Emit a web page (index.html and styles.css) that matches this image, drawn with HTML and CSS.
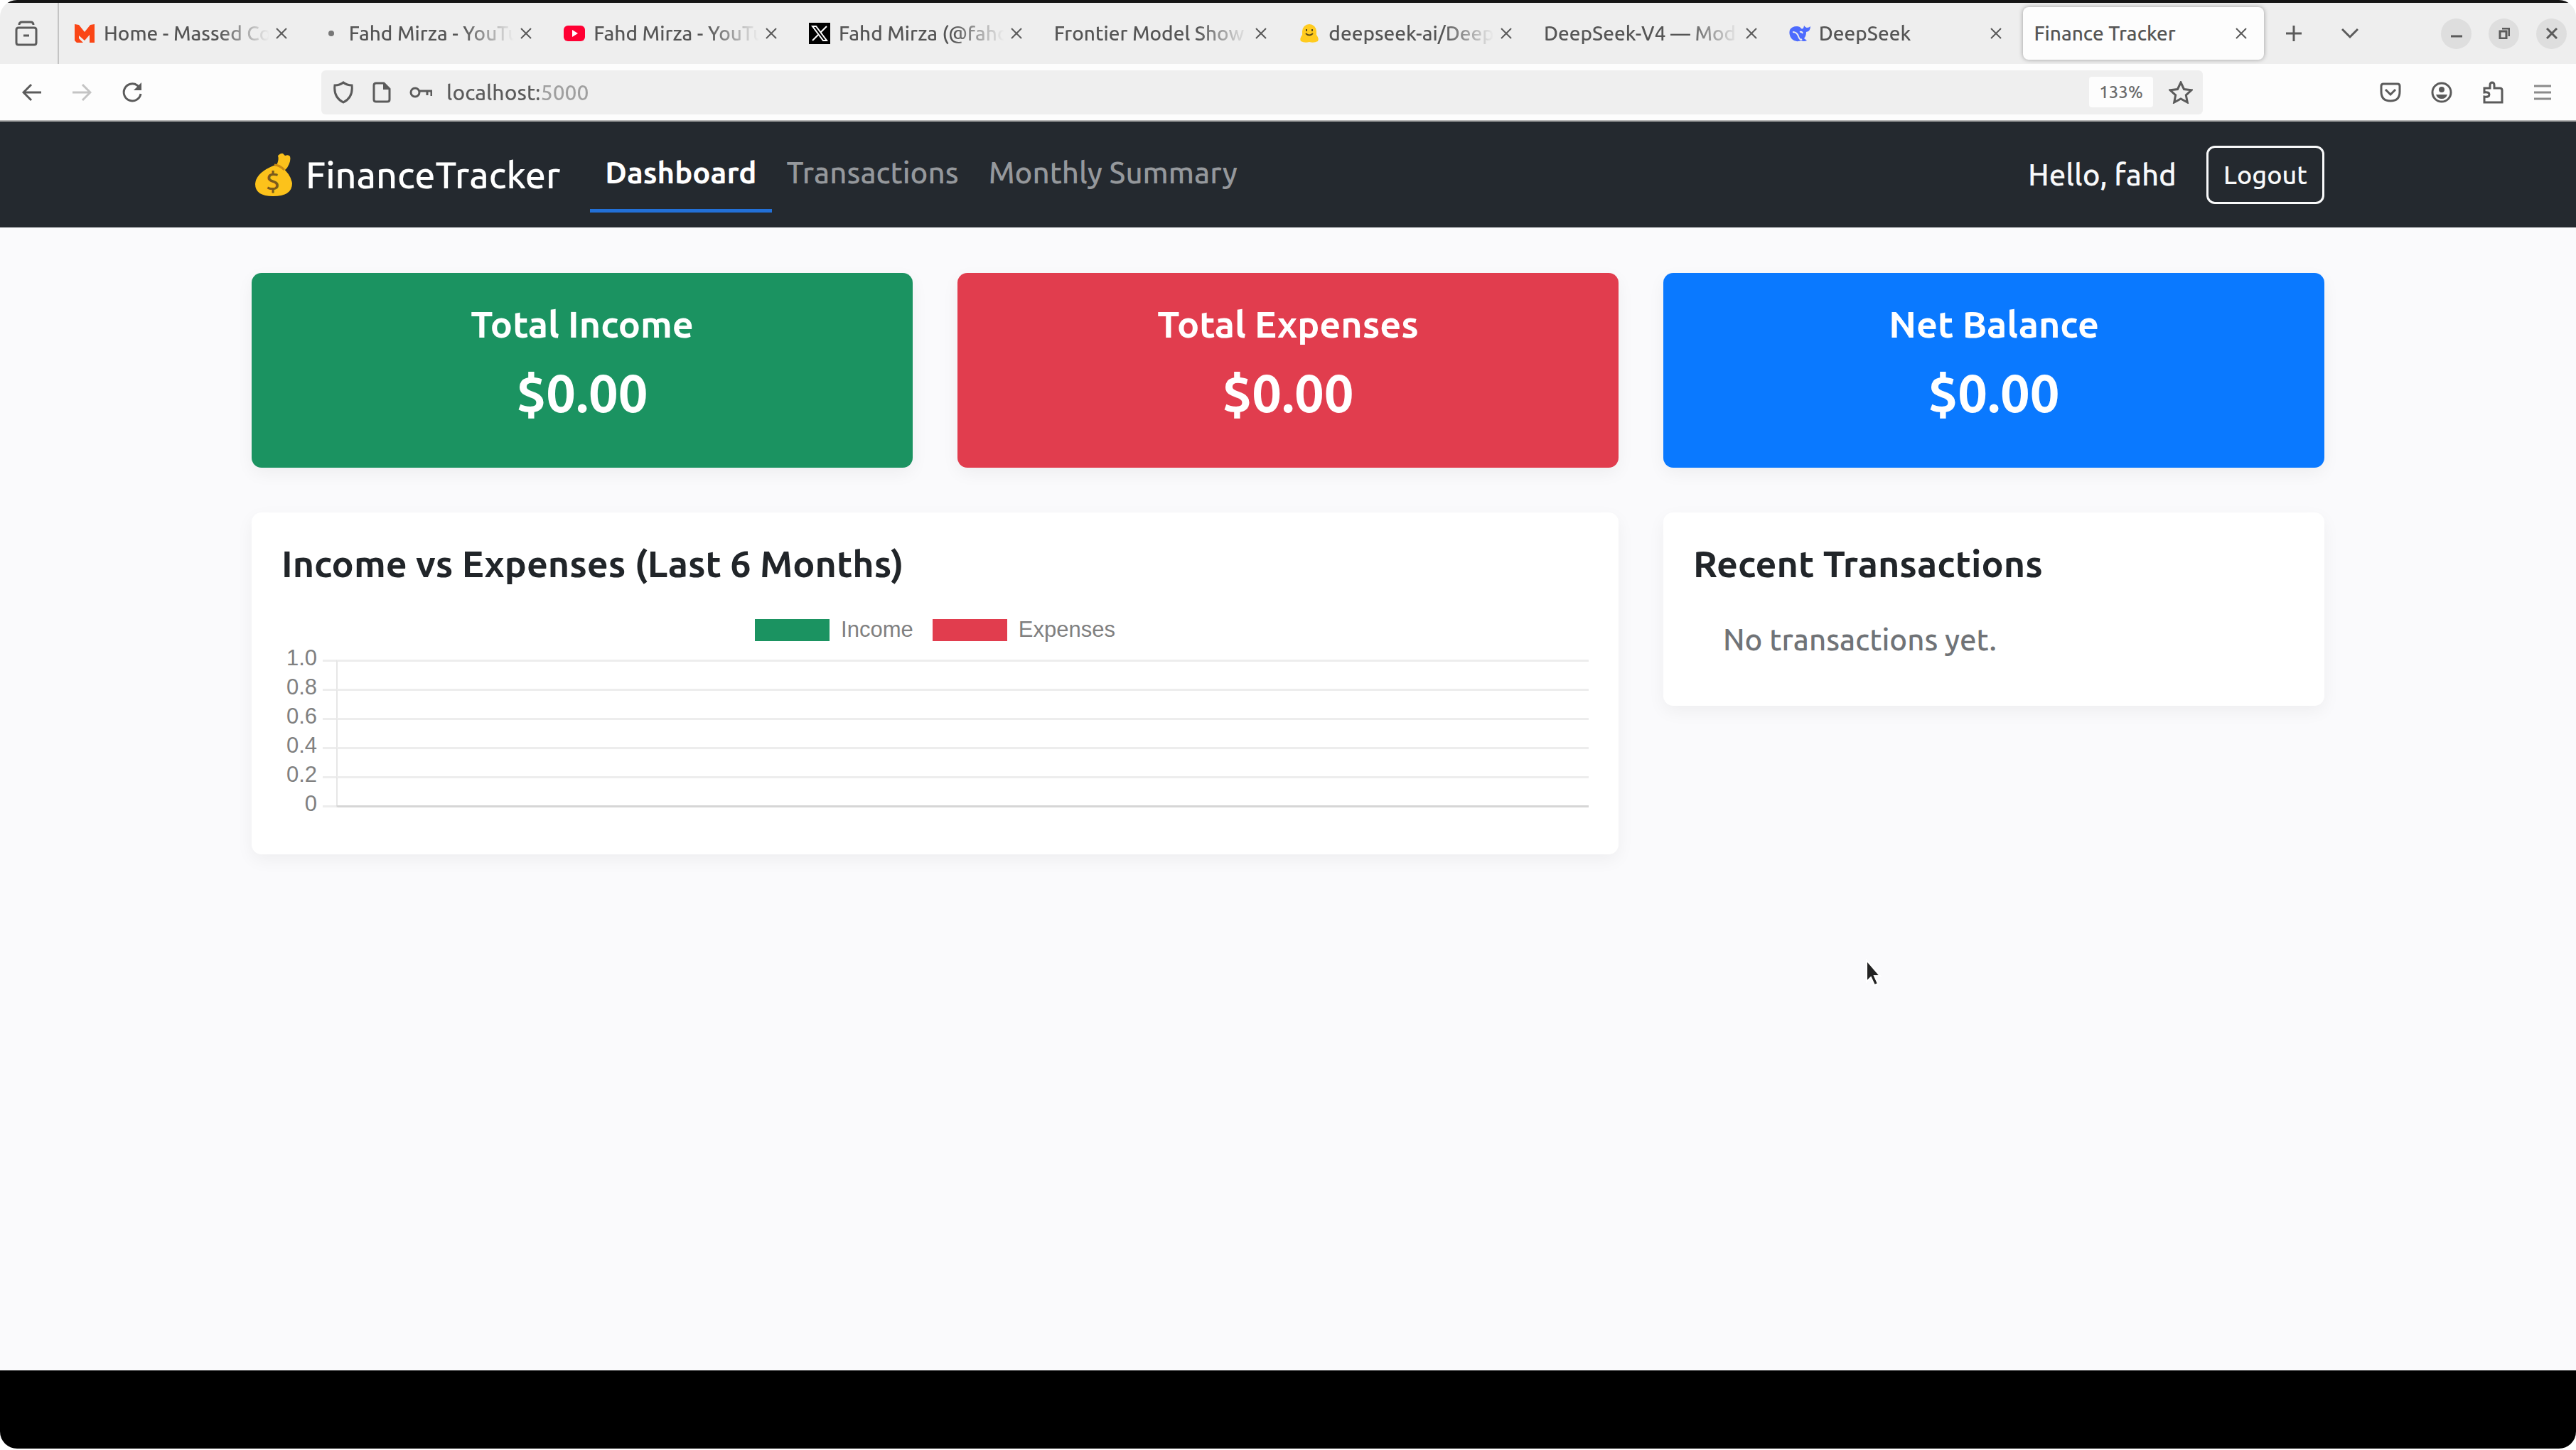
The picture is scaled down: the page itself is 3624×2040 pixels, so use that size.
FILE: index.html
```html
<!DOCTYPE html>
<html lang="en">
<head>
  <meta charset="utf-8">
  <meta name="viewport" content="width=device-width, initial-scale=1">
  <title>Finance Tracker</title>
  <link rel="stylesheet" href="styles.css">
</head>
<body>
<div class="window">

  <!-- tab strip -->
  <div class="tabstrip">
    <button class="history-btn" aria-label="Recent browsing">
      <svg width="34" height="36" viewBox="0 0 34 36"><path d="M7 6q0-4 4-4h12q4 0 4 4M3 13q0-3 3-3h22q3 0 3 3v18q0 3-3 3H6q-3 0-3-3zM13 21h8"/></svg>
    </button>
    <div class="tabs">
      <div class="tab">
        <svg class="favicon" viewBox="0 0 30 30"><path fill="#fa4616" d="M1 2l6 1 8 10 8-10 6-1v26h-7V17l-7 8-8-7v4l6 6H4l-3-3z"/></svg>
        <span class="tab-title">Home - Massed Co</span>
        <button class="close" aria-label="Close tab"><svg viewBox="0 0 18 18"><path d="M2 2l14 14M16 2L2 16"/></svg></button>
      </div>
      <div class="tab">
        <svg class="favicon" viewBox="0 0 30 30"><circle cx="17" cy="15" r="4" fill="#777"/></svg>
        <span class="tab-title">Fahd Mirza - YouTu</span>
        <button class="close" aria-label="Close tab"><svg viewBox="0 0 18 18"><path d="M2 2l14 14M16 2L2 16"/></svg></button>
      </div>
      <div class="tab">
        <svg class="favicon" viewBox="0 0 30 30"><rect y="4" width="30" height="22" rx="6" fill="#f03"/><path fill="#fff" d="M12 10l8 5-8 5z"/></svg>
        <span class="tab-title">Fahd Mirza - YouTu</span>
        <button class="close" aria-label="Close tab"><svg viewBox="0 0 18 18"><path d="M2 2l14 14M16 2L2 16"/></svg></button>
      </div>
      <div class="tab">
        <svg class="favicon" viewBox="0 0 30 30"><rect width="30" height="30" fill="#000"/><path fill="none" stroke="#fff" stroke-width="2" d="M5 5h5l15 20h-5zM25 5l-9 9M13 17l-8 8"/></svg>
        <span class="tab-title">Fahd Mirza (@fahd</span>
        <button class="close" aria-label="Close tab"><svg viewBox="0 0 18 18"><path d="M2 2l14 14M16 2L2 16"/></svg></button>
      </div>
      <div class="tab">
        <span class="tab-title">Frontier Model Show</span>
        <button class="close" aria-label="Close tab"><svg viewBox="0 0 18 18"><path d="M2 2l14 14M16 2L2 16"/></svg></button>
      </div>
      <div class="tab">
        <svg class="favicon" viewBox="0 0 30 30"><path fill="#ffcb1f" d="M5 12a10 10 0 0 1 20 0v5q4 5 2 9-6 3-12 1-6 2-12-1-2-4 2-9z"/><path fill="none" stroke="#5b4a1a" stroke-width="2" d="M11 9v3M19 9v3M10 15q5 5 10 0"/></svg>
        <span class="tab-title">deepseek-ai/Deep</span>
        <button class="close" aria-label="Close tab"><svg viewBox="0 0 18 18"><path d="M2 2l14 14M16 2L2 16"/></svg></button>
      </div>
      <div class="tab">
        <span class="tab-title">DeepSeek-V4 — Mod</span>
        <button class="close" aria-label="Close tab"><svg viewBox="0 0 18 18"><path d="M2 2l14 14M16 2L2 16"/></svg></button>
      </div>
      <div class="tab">
        <svg class="favicon" viewBox="0 0 30 30"><path fill="#4d6bfe" d="M11 5q4 0 6 3 3 2 4-4 2 3 4 3 3 0 5-2 0 7-6 8 0 6-3 9l4 3q-4 2-8 0Q9 28 4 23-1 17 1 10 4 5 11 5z"/><path fill="none" stroke="#eee" stroke-width="2" d="M5 13q6 0 8 6t5 4M15 13q3-1 4 2"/></svg>
        <span class="tab-title">DeepSeek</span>
        <button class="close" aria-label="Close tab"><svg viewBox="0 0 18 18"><path d="M2 2l14 14M16 2L2 16"/></svg></button>
      </div>
      <div class="tab active">
        <span class="tab-title">Finance Tracker</span>
        <button class="close" aria-label="Close tab"><svg viewBox="0 0 18 18"><path d="M2 2l14 14M16 2L2 16"/></svg></button>
      </div>
    </div>
    <div class="strip-btns">
      <button aria-label="New tab"><svg width="24" height="24" viewBox="0 0 24 24"><path d="M12 1v22M1 12h22"/></svg></button>
      <button aria-label="List all tabs"><svg width="24" height="24" viewBox="0 0 24 24"><path d="M1 6l11 11L23 6"/></svg></button>
    </div>
    <div class="win-btns">
      <button aria-label="Minimize"><svg width="16" height="16" viewBox="0 0 16 16"><path d="M0 12h16"/></svg></button>
      <button aria-label="Restore"><svg width="16" height="16" viewBox="0 0 16 16"><path d="M2 5h9v10H2zM5 1h10v11"/></svg></button>
      <button aria-label="Close"><svg width="16" height="16" viewBox="0 0 16 16"><path d="M1 1l14 14M15 1L1 15"/></svg></button>
    </div>
  </div>

  <!-- address bar -->
  <div class="toolbar">
    <div class="nav-btns">
      <button aria-label="Back"><svg width="28" height="28" viewBox="0 0 28 28"><path d="M27 14H2M13 3L2 14l11 11"/></svg></button>
      <button class="off" aria-label="Forward"><svg width="28" height="28" viewBox="0 0 28 28"><path d="M1 14h25M15 3l11 11-11 11"/></svg></button>
      <button aria-label="Reload"><svg width="30" height="30" viewBox="0 0 30 30"><path d="M27 17A12 12 0 1 1 22 5l3 3"/><path class="solid" d="M28 1v11H17z"/></svg></button>
    </div>
    <div class="urlbar">
      <svg width="30" height="32" viewBox="0 0 30 32"><path d="M15 2q5 4 12 4 2 17-12 24Q1 23 3 6q7 0 12-4z"/></svg>
      <svg width="26" height="30" viewBox="0 0 26 30"><path d="M2 5q0-3 3-3h11l8 8v15q0 3-3 3H5q-3 0-3-3z"/><path class="solid" d="M15 2l9 9h-9z"/></svg>
      <svg width="32" height="20" viewBox="0 0 32 20"><circle cx="8" cy="10" r="6"/><path d="M14 8h17v7M25 8v6"/></svg>
      <input class="url" type="text" value="localhost:5000" aria-label="Address">
      <button class="zoom-level">133%</button>
      <svg width="34" height="32" viewBox="0 0 34 32"><path d="M17 2l4.500 9.500 10.500 1.300-7.700 7 2 10.200-9.300-5-9.300 5 2-10.200-7.700-7 10.500-1.300z"/></svg>
    </div>
    <div class="tool-btns">
      <button aria-label="Save to Pocket"><svg width="30" height="30" viewBox="0 0 30 30"><path d="M5 3h20q3 0 3 3v8q0 13-13 13T2 14V6q0-3 3-3zM8 11l7 7 7-7"/></svg></button>
      <button aria-label="Account"><svg width="30" height="30" viewBox="0 0 30 30"><circle cx="15" cy="15" r="13"/><circle class="solid" cx="15" cy="11" r="4"/><path class="solid" d="M7 18h16q-2 6-8 6t-8-6z"/></svg></button>
      <button aria-label="Extensions"><svg width="30" height="32" viewBox="0 0 30 32"><path d="M3 30V22q7 1 7-3t-7-3v-6h8V6q0-4 3-4t3 4v4h8q3 0 3 3v17z"/></svg></button>
      <button class="menu-btn" aria-label="Menu"><svg width="26" height="24" viewBox="0 0 26 24"><path d="M1 3h24M1 12h24M1 21h24"/></svg></button>
    </div>
  </div>

  <!-- page -->
  <div class="page">
    <nav class="navbar">
      <div class="container nav-inner">
        <a class="brand" href="#">
          <svg width="54" height="62" viewBox="0 0 54 62">
            <path fill="#fcc21b" d="M31 17q4-7 2-13 4-4 7-3l3 3q5-2 7 1 2 6-4 16l-4 4-12-4z"/>
            <path fill="#fcc21b" d="M27 18q6-2 12 3 12 9 14 22 0 18-27 18Q1 61 1 44q1-16 26-26z"/>
            <path fill="none" stroke="#c98a12" stroke-width="3" d="M28 17q7 0 14 7"/>
            <text x="26" y="52" text-anchor="middle" class="dollar">$</text>
          </svg>
          FinanceTracker</a>
        <div class="nav-links">
          <a class="active" href="#">Dashboard</a>
          <a href="#">Transactions</a>
          <a href="#">Monthly Summary</a>
        </div>
        <span class="hello">Hello, fahd</span>
        <button class="logout">Logout</button>
      </div>
    </nav>

    <main class="container grid">
      <section class="card stat income">
        <h5>Total Income</h5>
        <h2>$0.00</h2>
      </section>
      <section class="card stat expense">
        <h5>Total Expenses</h5>
        <h2>$0.00</h2>
      </section>
      <section class="card stat balance">
        <h5>Net Balance</h5>
        <h2>$0.00</h2>
      </section>

      <section class="card chart-card">
        <h5>Income vs Expenses (Last 6 Months)</h5>
        <div class="legend">
          <span class="swatch income"></span><span>Income</span>
          <span class="swatch expense"></span><span>Expenses</span>
        </div>
        <div class="chart">
          <div class="row"><span>1.0</span><i class="tick"></i><i class="line"></i></div>
          <div class="row"><span>0.8</span><i class="tick"></i><i class="line"></i></div>
          <div class="row"><span>0.6</span><i class="tick"></i><i class="line"></i></div>
          <div class="row"><span>0.4</span><i class="tick"></i><i class="line"></i></div>
          <div class="row"><span>0.2</span><i class="tick"></i><i class="line"></i></div>
          <div class="row base"><span>0</span><i class="tick"></i><i class="line"></i></div>
        </div>
      </section>

      <section class="card recent">
        <h5>Recent Transactions</h5>
        <p>No transactions yet.</p>
      </section>
    </main>
  </div>

  <div class="letterbox"></div>

  <svg class="cursor" width="24" height="40" viewBox="0 0 24 40"><path d="M2 2v30l6-6 5 11 5-2-5-11h8z"/></svg>
</div>
</body>
</html>
```

FILE: styles.css
```css
* {box-sizing: border-box;}
body {margin: 0; background: #fff; color: #212529; font-family: Ubuntu, "Noto Sans", sans-serif; font-size: 42px; line-height: 60px; font-weight: 500;}
button {border: 0; padding: 0; background: none; font-family: inherit; font-weight: inherit; cursor: pointer;}
svg {display: block; flex: none;}
h2, h5, p {margin: 0;}
a {text-decoration: none;}

.window {position: relative; display: flex; flex-direction: column; min-height: calc(100vh - 2px); border-radius: 24px; overflow: hidden; background: #fafafc;}

/* tab strip */
.tabstrip {display: flex; align-items: center; height: 90px; border-top: 4px solid #151515; background: #eee;}
.tabstrip svg, .toolbar svg {fill: none; stroke: #5b5b5b; stroke-width: 3;}
.tabstrip .favicon {stroke: none;}
.history-btn {display: flex; align-items: center; justify-content: center; align-self: stretch; width: 83px; padding-right: 8px; border-right: 2px solid #c4c4c4;}
.tabs {display: flex; gap: 6px; flex: 0 1 3096px; min-width: 0; margin-left: 6px;}
.tab {display: flex; align-items: center; flex: 1 1 0; min-width: 0; height: 74px; padding: 0 23px 0 15px; border-radius: 8px; font-size: 28px; line-height: 40px; color: #555;}
.tab.active {background: #fdfdfd; box-shadow: 0 0 6px rgba(0,0,0,.35);}
.favicon {width: 30px; height: 30px; margin-right: 12px;}
.tab-title {flex: 1; overflow: hidden; white-space: nowrap; -webkit-mask-image: linear-gradient(to left, transparent 4px, #000 76px); mask-image: linear-gradient(to left, transparent 4px, #000 76px);}
.tab.active .tab-title {-webkit-mask-image: none; mask-image: none;}
.close {margin-left: 4px;}
.close svg {width: 18px; height: 18px; stroke-width: 2;}
.strip-btns {display: flex; gap: 55px; margin-left: 30px;}
.win-btns {display: flex; gap: 24px; margin: 0 13px 0 auto;}
.win-btns button {display: flex; align-items: center; justify-content: center; width: 43px; height: 43px; border-radius: 50%; background: #dedede;}

/* toolbar */
.toolbar {display: flex; align-items: center; height: 81px; padding: 0 34px 0 31px; border-bottom: 2px solid #b5b5b5; background: #fdfdfd;}
.toolbar .solid {fill: #5b5b5b; stroke: none;}
.nav-btns {display: flex; align-items: center; gap: 42px;}
.off {opacity: .35;}
.urlbar {display: flex; align-items: center; flex: 1; height: 62px; margin: 0 249px 0 251px; padding: 0 14px 0 16px; border-radius: 6px; background: #efefef;}
.urlbar svg {margin-right: 26px;}
.urlbar svg:nth-child(3) {margin-right: 20px;}
.urlbar svg:last-child {margin: 0 0 0 22px;}
.url {flex: 1; border: 0; outline: 0; padding: 0; font-family: inherit; font-size: 30px; line-height: 40px; font-weight: inherit; color: transparent; background: linear-gradient(to right, #5b5b5b 130px, #a0a0a0 130px); -webkit-background-clip: text; background-clip: text;}
.zoom-level {width: 90px; height: 43px; border-radius: 4px; background: #fdfdfd; font-size: 24px; color: #6b6b6b;}
.tool-btns {display: flex; align-items: center; gap: 42px;}
.menu-btn svg {opacity: .7;}

/* navbar */
.page {flex: 1;}
.container {max-width: 2916px; margin: 0 auto;}
.navbar {padding: 21px; background: #24292f;}
.nav-inner {display: flex; align-items: center; height: 107px;}
.brand {display: flex; align-items: center; gap: 18px; margin-right: 42px; padding-left: 4px; font-size: 52px; color: #fff;}
.dollar {font-size: 36px; fill: #7a5a1c;}
.nav-links {display: flex; flex: 1;}
.nav-links a {padding: 21px; border-bottom: 5px solid transparent; color: #95989c; white-space: nowrap;}
.nav-links a.active {border-color: #2270d8; font-weight: 700; color: #fff;}
.hello {margin-right: 42px; color: #f8f9fa;}
.logout {height: 82px; padding: 0 21px; border: 3px solid #f8f9fa; border-radius: 12px; font-size: 36px; color: #f8f9fa;}

/* cards */
.grid {display: grid; grid-template-columns: repeat(3, 1fr); align-items: start; gap: 63px; margin-top: 64px;}
.card {padding: 42px; border-radius: 14px; background: #fff; box-shadow: 0 8px 24px rgba(0,0,0,.05);}
.card h5 {margin-bottom: 21px; font-size: 52px; line-height: 60px; font-weight: 600;}
.stat {text-align: center; color: #fff;}
.stat h2 {margin-bottom: 17px; font-size: 74px; line-height: 92px; font-weight: 600;}
.income {background: #1b9361;}
.expense {background: #e13d4e;}
.balance {background: #0a79ff;}
.recent p {padding: 26px 42px 21px; color: #707377;}

/* chart */
.chart-card {grid-column: span 2; height: 481px;}
.legend, .chart {font-family: "Liberation Sans", Arial, sans-serif; font-size: 31px; line-height: 32px; font-weight: 400; color: #808080;}
.legend {display: flex; align-items: center; justify-content: center; gap: 16px; padding: 26px 0;}
.swatch {width: 105px; height: 31px;}
.legend .expense {margin-left: 11px;}
.row {display: flex; height: 41px;}
.row span {width: 50px; margin-top: -18px; text-align: right;}
.tick, .line {border-top: 3px solid #ededed;}
.tick {width: 19px; margin-left: 8px;}
.line {flex: 1; border-left: 2px solid #e6e6e6;}
.base .line {height: 3px; border-top-color: #d6d6d6;}

.cursor {position: absolute; left: 72.4%; top: 66.2%; fill: #222; stroke: #fff; stroke-width: 2;}
.letterbox {height: 110px; background: #000;}
```
